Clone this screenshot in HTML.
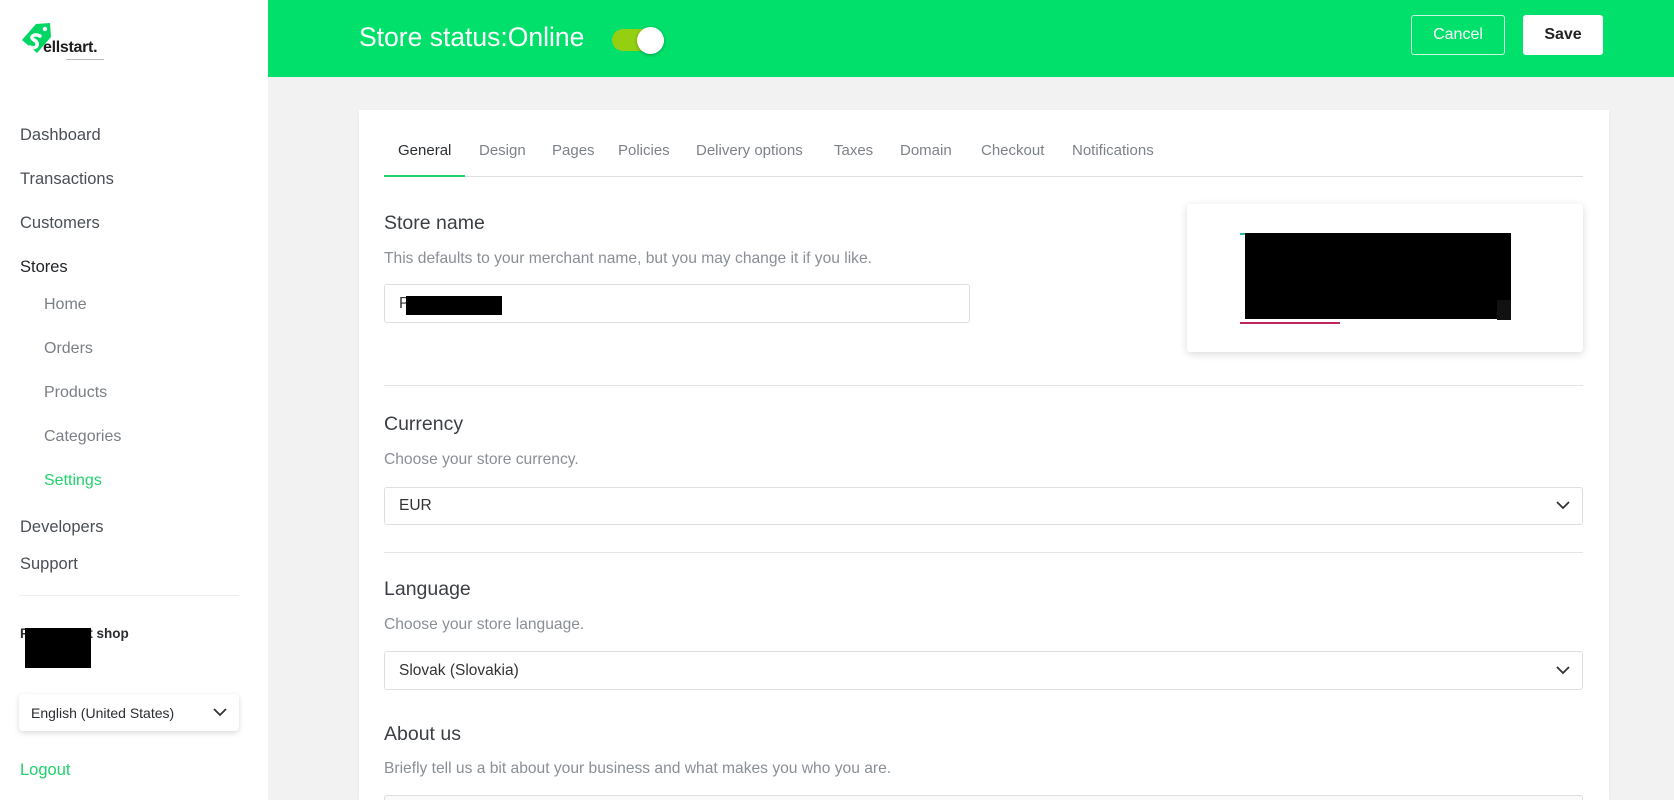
<!DOCTYPE html>
<html style="width:1674px;height:800px;overflow:hidden"><head><meta charset="utf-8"><style>
*{box-sizing:border-box;margin:0;padding:0}
body{width:1674px;height:800px;overflow:hidden;background:#f2f2f2;font-family:"Liberation Sans",Arial,sans-serif;position:relative}
.side{position:absolute;left:0;top:0;width:268px;height:800px;background:#fff}
.abs{position:absolute}
.nav{position:absolute;left:20px;font-size:16.5px;color:#4a4f55}
.sub{position:absolute;left:44px;font-size:16px;color:#7a7f85}
.hdr{position:absolute;left:268px;top:0;width:1406px;height:77px;background:#00e06a}
.card{position:absolute;left:359px;top:110px;width:1250px;height:690px;background:#fff;box-shadow:0 1px 3px rgba(0,0,0,.06);overflow:hidden}
.tab{position:absolute;top:32px;font-size:15px;color:#7d8288}
.title{position:absolute;left:25px;font-size:19.5px;color:#3b3f44}
.desc{position:absolute;left:25px;font-size:15.6px;color:#8a8f95}
.inp{position:absolute;left:25px;border:1px solid #dcdfe2;border-radius:3px;background:#fff;font-size:15.5px;color:#333;padding-left:14px;display:flex;align-items:center}
.hr{position:absolute;left:25px;width:1199px;height:1px;background:#e3e5e7}
.chev{position:absolute;right:12px;top:50%;margin-top:-5px}
</style></head><body>
<div class="side">
  <svg class="abs" style="left:19px;top:20px" width="36" height="38" viewBox="0 0 36 38">
    <path d="M3 20 L17 4 L31 3 L32 17 L18 33 Z" fill="#00d664"/>
    <circle cx="26" cy="9" r="2.2" fill="#fff"/>
    <path d="M21 16 C15 13 10 17 15 20 C21 23 18 30 11 27" stroke="#fff" stroke-width="3.5" fill="none" stroke-linecap="round"/>
  </svg>
  <div class="abs" style="left:43px;top:39px;font-size:16px;font-weight:bold;color:#1d1d1d;letter-spacing:-0.3px">ellstart.</div>
  <div class="abs" style="left:66px;top:59px;width:38px;height:1px;background:#bbb"></div>
  <div class="nav" style="top:126px">Dashboard</div>
  <div class="nav" style="top:170px">Transactions</div>
  <div class="nav" style="top:214px">Customers</div>
  <div class="nav" style="top:258px;color:#1f2226">Stores</div>
  <div class="sub" style="top:296px">Home</div>
  <div class="sub" style="top:340px">Orders</div>
  <div class="sub" style="top:384px">Products</div>
  <div class="sub" style="top:428px">Categories</div>
  <div class="sub" style="top:472px;color:#1fd36d">Settings</div>
  <div class="nav" style="top:518px">Developers</div>
  <div class="nav" style="top:555px">Support</div>
  <div class="abs" style="left:19px;top:595px;width:220px;height:1px;background:#eceeef"></div>
  <div class="abs" style="left:20px;top:626px;font-size:13.5px;font-weight:bold;color:#2a2d31">F&nbsp;&nbsp;&nbsp;&nbsp;&nbsp;&nbsp;&nbsp;&nbsp;&nbsp;&nbsp;&nbsp;&nbsp;&nbsp;&nbsp;&nbsp;&nbsp;t shop</div>
  <div class="abs" style="left:25px;top:628px;width:66px;height:40px;background:#000"></div>
  <div class="abs" style="left:19px;top:694px;width:220px;height:37px;background:#fff;border-radius:4px;box-shadow:0 2px 6px rgba(0,0,0,.15);font-size:14px;color:#2a2d31;padding:11px 0 0 12px">English (United States)
    <svg class="abs" style="right:12px;top:14px" width="14" height="9" viewBox="0 0 14 9"><path d="M1 1 L7 7 L13 1" stroke="#333" stroke-width="1.8" fill="none"/></svg>
  </div>
  <div class="abs" style="left:20px;top:761px;font-size:16.5px;color:#1fd36d">Logout</div>
</div>
<div class="hdr">
  <div class="abs" style="left:91px;top:22px;font-size:26.5px;color:#fff">Store status:Online</div>
  <div class="abs" style="left:344px;top:29px;width:52px;height:22px;border-radius:11px;background:#94cf12"></div>
  <div class="abs" style="left:369px;top:27px;width:27px;height:27px;border-radius:50%;background:#fff;box-shadow:0 1px 3px rgba(0,0,0,.3)"></div>
  <div class="abs" style="left:1143px;top:15px;width:94px;height:40px;border:1px solid rgba(255,255,255,.8);border-radius:3px;color:#fff;font-size:16px;text-align:center;line-height:38px">Cancel</div>
  <div class="abs" style="left:1255px;top:15px;width:80px;height:40px;background:#fff;border-radius:3px;color:#222;font-size:16px;font-weight:bold;text-align:center;line-height:40px">Save</div>
</div>
<div class="card">
  <div class="tab" style="left:39px;color:#2b2f33">General</div>
  <div class="tab" style="left:120px">Design</div>
  <div class="tab" style="left:193px">Pages</div>
  <div class="tab" style="left:259px">Policies</div>
  <div class="tab" style="left:337px">Delivery options</div>
  <div class="tab" style="left:475px">Taxes</div>
  <div class="tab" style="left:541px">Domain</div>
  <div class="tab" style="left:622px">Checkout</div>
  <div class="tab" style="left:713px">Notifications</div>
  <div class="hr" style="top:66px;background:#dcdfe2"></div>
  <div class="abs" style="left:25px;top:65px;width:81px;height:2px;background:#1fd36d"></div>
  <div class="title" style="top:102px">Store name</div>
  <div class="desc" style="top:140px">This defaults to your merchant name, but you may change it if you like.</div>
  <div class="inp" style="top:174px;width:586px;height:39px">P</div>
  <div class="abs" style="left:47px;top:186px;width:96px;height:19px;background:#000"></div>
  <div class="abs" style="left:828px;top:94px;width:396px;height:148px;background:#fff;box-shadow:0 2px 8px rgba(0,0,0,.15);border-radius:3px">
    <div class="abs" style="left:53px;top:29px;width:100px;height:2px;background:#2bb5a8"></div>
    <div class="abs" style="left:53px;top:118px;width:100px;height:2px;background:#c0265a"></div>
    <div class="abs" style="left:58px;top:29px;width:266px;height:86px;background:#000"></div>
    <div class="abs" style="left:310px;top:96px;width:14px;height:20px;background:#111"></div>
  </div>
  <div class="hr" style="top:275px"></div>
  <div class="title" style="top:303px">Currency</div>
  <div class="desc" style="top:341px">Choose your store currency.</div>
  <div class="inp" style="top:377px;width:1199px;height:38px">EUR<svg class="chev" width="14" height="9" viewBox="0 0 14 9"><path d="M1 1 L7 7 L13 1" stroke="#333" stroke-width="1.8" fill="none"/></svg></div>
  <div class="hr" style="top:442px"></div>
  <div class="title" style="top:468px">Language</div>
  <div class="desc" style="top:506px">Choose your store language.</div>
  <div class="inp" style="top:541px;width:1199px;height:39px">Slovak (Slovakia)<svg class="chev" width="14" height="9" viewBox="0 0 14 9"><path d="M1 1 L7 7 L13 1" stroke="#333" stroke-width="1.8" fill="none"/></svg></div>
  <div class="title" style="top:613px">About us</div>
  <div class="desc" style="top:650px">Briefly tell us a bit about your business and what makes you who you are.</div>
  <div class="inp" style="top:685px;width:1199px;height:40px;background:#fafafa"></div>
</div>
</body></html>
